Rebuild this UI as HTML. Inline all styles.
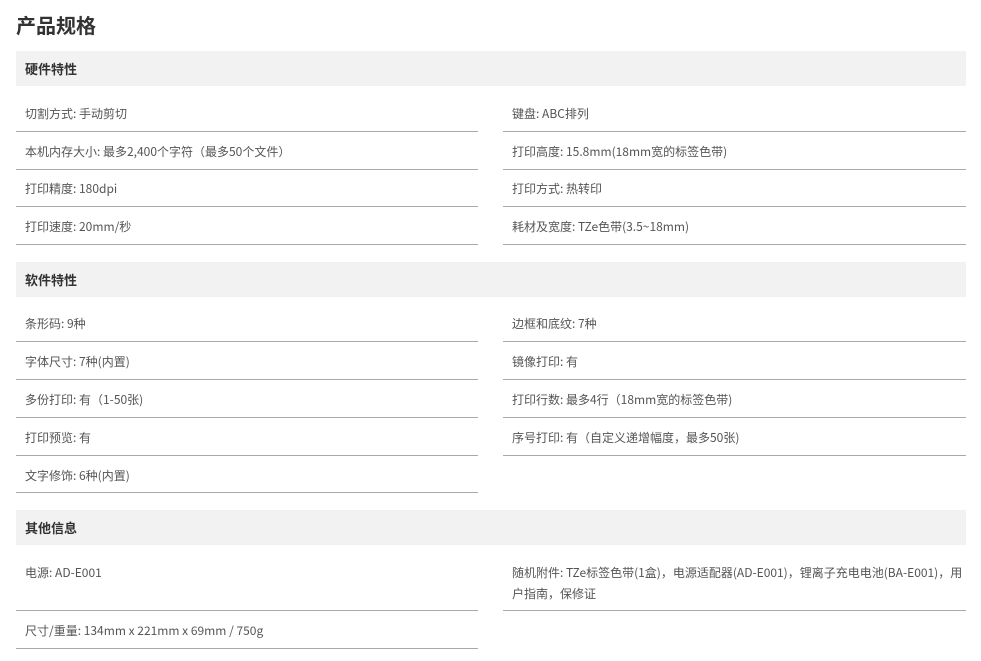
<!DOCTYPE html>
<html><head><meta charset="utf-8"><style>
body{margin:0;background:#fff;font-family:"Noto Sans CJK SC","Liberation Sans",sans-serif;color:#555;width:981px;height:661px;position:relative;overflow:hidden}
.t{position:absolute;left:16px;top:10px;font-size:20px;font-weight:bold;color:#333;line-height:30px}
.h{position:absolute;left:16px;width:950px;height:35px;background:#f2f2f2;font-size:13px;font-weight:bold;color:#333;line-height:35px;box-sizing:border-box;padding-left:9px}
.c{position:absolute;width:463px;border-bottom:1px solid #aaa;font-size:12px;line-height:21px;box-sizing:border-box;padding-left:9px;padding-top:1px}
.l{left:16px;width:462px}.r{left:503px}
</style></head><body>
<div class="t">产品规格</div>
<div class="h" style="top:51px">硬件特性</div>
<div class="c l" style="top:102px;height:30px">切割方式: 手动剪切</div>
<div class="c r" style="top:102px;height:30px">键盘: ABC排列</div>
<div class="c l" style="top:132px;height:38px;padding-top:9px">本机内存大小: 最多2,400个字符（最多50个文件）</div>
<div class="c r" style="top:132px;height:38px;padding-top:9px">打印高度: 15.8mm(18mm宽的标签色带)</div>
<div class="c l" style="top:170px;height:37px;padding-top:8px">打印精度: 180dpi</div>
<div class="c r" style="top:170px;height:37px;padding-top:8px">打印方式: 热转印</div>
<div class="c l" style="top:207px;height:38px;padding-top:9px">打印速度: 20mm/秒</div>
<div class="c r" style="top:207px;height:38px;padding-top:9px">耗材及宽度: TZe色带(3.5~18mm)</div>
<div class="h" style="top:262px">软件特性</div>
<div class="c l" style="top:312px;height:30px">条形码: 9种</div>
<div class="c r" style="top:312px;height:30px">边框和底纹: 7种</div>
<div class="c l" style="top:342px;height:38px;padding-top:9px">字体尺寸: 7种(内置)</div>
<div class="c r" style="top:342px;height:38px;padding-top:9px">镜像打印: 有</div>
<div class="c l" style="top:380px;height:38px;padding-top:9px">多份打印: 有（1-50张)</div>
<div class="c r" style="top:380px;height:38px;padding-top:9px">打印行数: 最多4行（18mm宽的标签色带)</div>
<div class="c l" style="top:418px;height:38px;padding-top:9px">打印预览: 有</div>
<div class="c r" style="top:418px;height:38px;padding-top:9px">序号打印: 有（自定义递增幅度，最多50张)</div>
<div class="c l" style="top:456px;height:37px;padding-top:9px">文字修饰: 6种(内置)</div>
<div class="h" style="top:510px">其他信息</div>
<div class="c l" style="top:561px;height:50px">电源: AD-E001</div>
<div class="c r" style="top:561px;height:50px">随机附件: TZe标签色带(1盒)，电源适配器(AD-E001)，锂离子充电电池(BA-E001)，用户指南，保修证</div>
<div class="c l" style="top:611px;height:38px;padding-top:9px">尺寸/重量: 134mm x 221mm x 69mm / 750g</div>
</body></html>
